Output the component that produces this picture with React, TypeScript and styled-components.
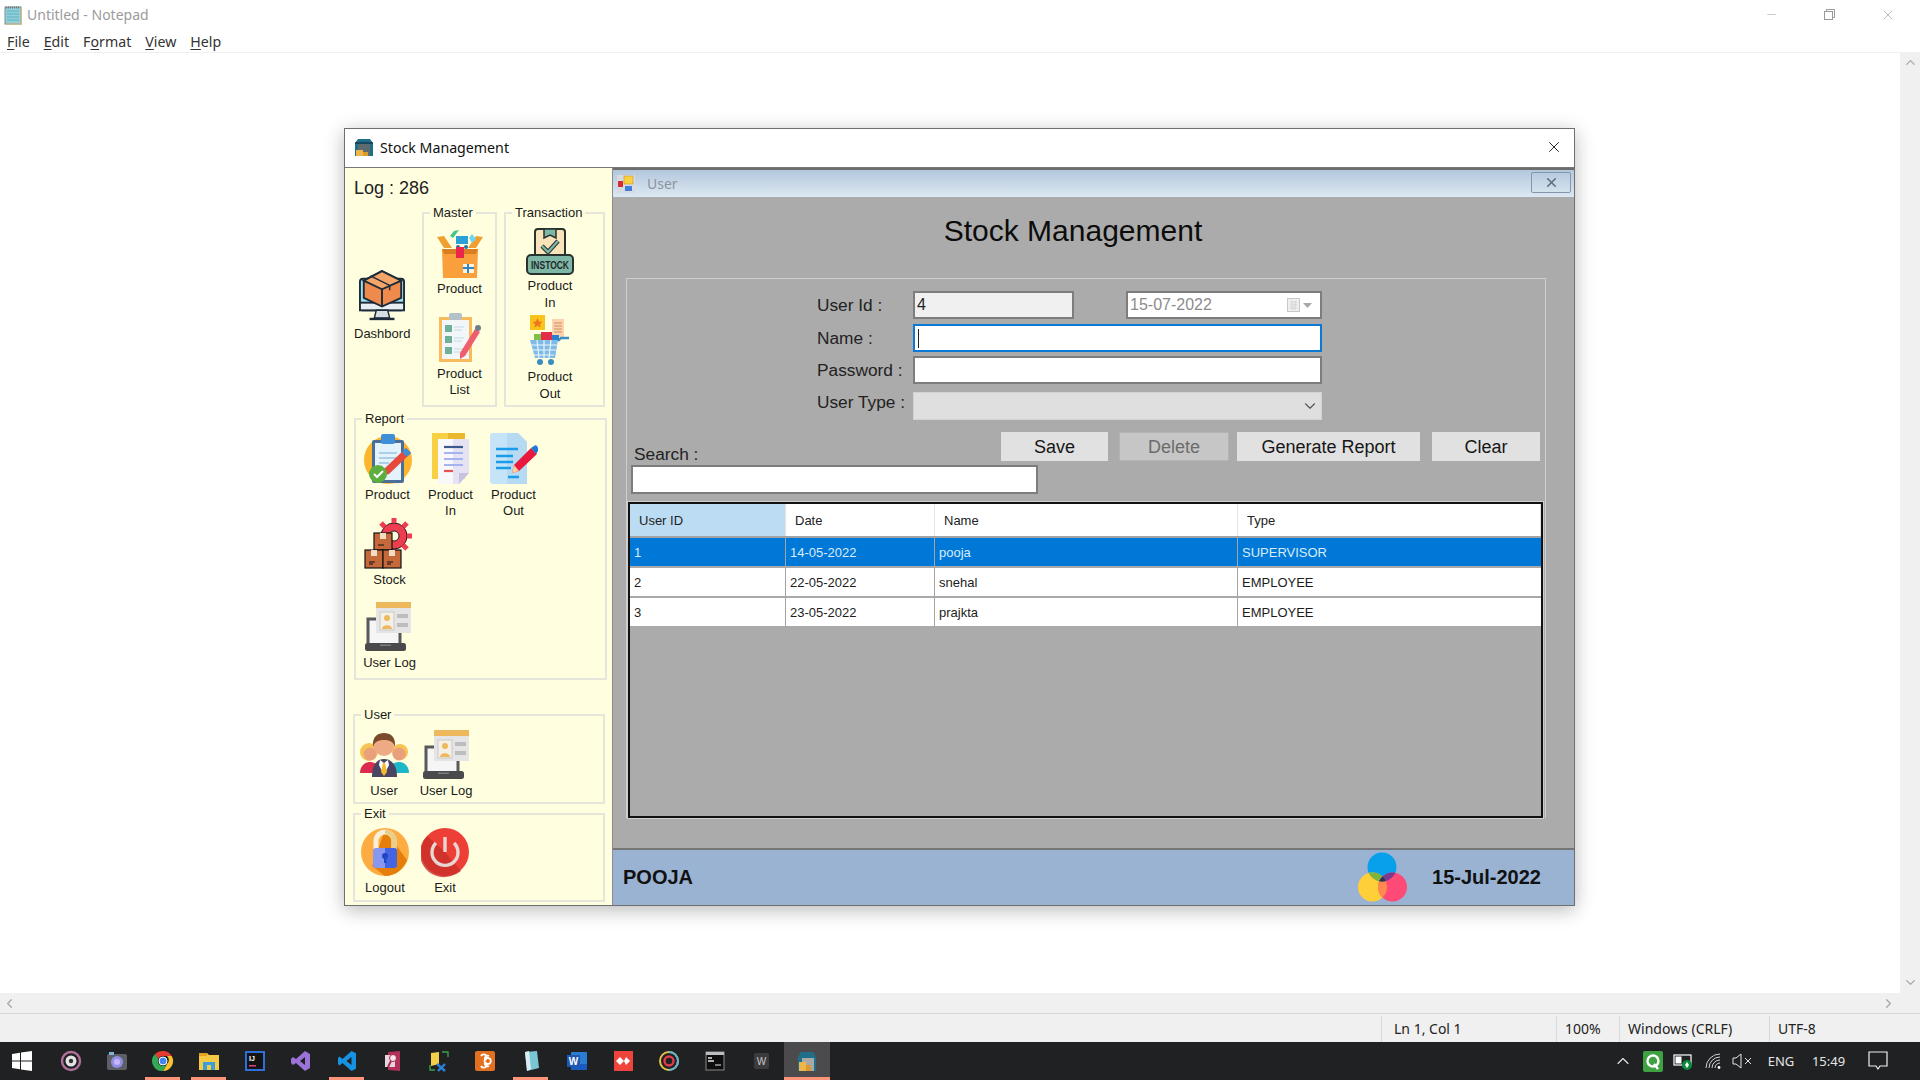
import React from "react";
import styled, { createGlobalStyle } from "styled-components";
import { ChevronDown, ChevronLeft, ChevronRight, ChevronUp, Minus, X } from "lucide-react";

const ui = `"Noto Sans", "Open Sans", sans-serif`;
const arial = `"Liberation Sans", Arial, sans-serif`;

const GlobalStyle = createGlobalStyle`
  html, body {
    margin: 0;
    padding: 0;
    background: #fff;
    overflow: hidden;
  }
  * {
    box-sizing: border-box;
  }
`;

/* ---------- notepad behind the app ---------- */

const Screen = styled.div`
  position: relative;
  width: 1920px;
  height: 1080px;
  display: flex;
  flex-direction: column;
  font-family: ${ui};
`;

const NotepadTitle = styled.div`
  height: 29px;
  display: flex;
  align-items: center;
  padding-left: 3px;
  gap: 4px;
  color: #9b9b9b;
  font-size: 14px;
`;

const TitleText = styled.span`
  flex: 1;
`;

const CaptionButton = styled.div<{ $w?: number }>`
  width: ${(p) => p.$w ?? 58}px;
  height: 29px;
  display: flex;
  align-items: center;
  justify-content: center;
  color: #9a9a9a;
`;

const CaptionGroup = styled.div`
  display: flex;
  padding-right: 3px;
`;

const MenuBar = styled.div`
  height: 24px;
  display: flex;
  align-items: center;
  gap: 14px;
  padding: 1px 0 0 7px;
  font-size: 14.2px;
  color: #333;
  border-bottom: 1px solid #f0f0f0;
`;

const MenuItem = styled.span``;

const Mnemonic = styled.span`
  text-decoration: underline;
  text-underline-offset: 2px;
`;

const EditorRow = styled.div`
  flex: 1;
  display: flex;
  min-height: 0;
`;

const Editor = styled.div`
  flex: 1;
  background: #fff;
`;

const VScroll = styled.div`
  width: 20px;
  background: #f0f0f0;
  display: flex;
  flex-direction: column;
  justify-content: space-between;
  align-items: center;
  padding: 2px 0 3px;
  color: #a6a6a6;
`;

const HScroll = styled.div`
  height: 20px;
  background: #f0f0f0;
  display: flex;
  justify-content: space-between;
  align-items: center;
  padding: 0 24px 0 2px;
  color: #a6a6a6;
`;

const StatusBar = styled.div`
  height: 29px;
  background: #f0f0f0;
  border-top: 1px solid #d9d9d9;
  display: flex;
  justify-content: flex-end;
  font-size: 14px;
  color: #222;
`;

const StatusCell = styled.div<{ $w: number; $pad: number }>`
  width: ${(p) => p.$w}px;
  padding-left: ${(p) => p.$pad}px;
  padding-bottom: 2px;
  margin: 2px 0 0;
  border-left: 1px solid #d9d9d9;
  display: flex;
  align-items: center;
`;

/* ---------- taskbar ---------- */

const Taskbar = styled.div`
  height: 38px;
  background: #1f2123;
  display: flex;
  align-items: stretch;
`;

const StartTile = styled.div`
  width: 48px;
  display: flex;
  align-items: center;
  justify-content: center;
  padding-right: 5px;
`;

const TaskTile = styled.div<{ $running?: boolean; $active?: boolean }>`
  position: relative;
  width: 46px;
  display: flex;
  align-items: center;
  justify-content: center;
  background: ${(p) => (p.$active ? "#4b4b4d" : "transparent")};

  &::after {
    content: "";
    display: ${(p) => (p.$running ? "block" : "none")};
    position: absolute;
    bottom: 0;
    height: 3px;
    left: ${(p) => (p.$active ? "0" : "5px")};
    right: ${(p) => (p.$active ? "0" : "6px")};
    background: #ff9478;
  }
`;

const Tray = styled.div`
  margin-left: auto;
  display: flex;
  padding-right: 15px;
  color: #e6e6e6;
  font-size: 13px;
`;

const TrayItem = styled.div<{ $w: number }>`
  width: ${(p) => p.$w}px;
  display: flex;
  align-items: center;
  justify-content: center;
`;

/* ---------- stock management window ---------- */

const StockWindow = styled.div`
  position: absolute;
  left: 344px;
  top: 128px;
  width: 1231px;
  height: 778px;
  background: #fff;
  border: 1px solid #6f6f6f;
  box-shadow: 0 4px 18px rgba(0, 0, 0, 0.28);
  display: flex;
  flex-direction: column;
`;

const WindowHeader = styled.div`
  height: 39px;
  display: flex;
  align-items: center;
  padding: 0 11px 2px 9px;
  gap: 6px;
  font-size: 14.2px;
  color: #111;
  border-bottom: 1px solid #777;
`;

const WindowTitle = styled.span`
  flex: 1;
`;

const WindowBody = styled.div`
  flex: 1;
  display: flex;
  min-height: 0;
`;

const Sidebar = styled.div`
  width: 267px;
  background: #ffffe0;
  padding-top: 10px;
  font-family: ${arial};
  color: #1a1a1a;
  display: flex;
  flex-direction: column;
`;

const LogText = styled.div`
  height: 20px;
  line-height: 20px;
  padding-left: 9px;
  margin-bottom: 7px;
  font-size: 18px;
  color: #222;
`;

const TopRow = styled.div`
  display: grid;
  grid-template-columns: 70px 75px 101px;
  column-gap: 7px;
  align-items: stretch;
`;

const DashboardCell = styled.div`
  display: flex;
  align-items: center;
  padding-left: 9px;
`;

const Group = styled.fieldset<{ $ml?: number; $width?: number; $mt?: number; $pt: number; $pb: number; $pr?: number }>`
  margin: ${(p) => p.$mt ?? 0}px 0 0 ${(p) => p.$ml ?? 0}px;
  width: ${(p) => (p.$width ? `${p.$width}px` : "auto")};
  min-width: 0;
  border: 2px solid #e5e5dc;
  padding: ${(p) => p.$pt}px ${(p) => p.$pr ?? 0}px ${(p) => p.$pb}px 0;
`;

const GroupLegend = styled.legend`
  margin-left: 6px;
  padding: 0 3px;
  font-size: 13px;
  line-height: 16px;
  color: #1a1a1a;
`;

const TileStack = styled.div<{ $gap: number }>`
  display: flex;
  flex-direction: column;
  gap: ${(p) => p.$gap}px;
`;

const TileGrid = styled.div<{ $cols: string; $rows?: string; $pl?: number }>`
  display: grid;
  grid-template-columns: ${(p) => p.$cols};
  grid-template-rows: ${(p) => p.$rows ?? "auto"};
  padding-left: ${(p) => p.$pl ?? 0}px;
`;

const TileBox = styled.div`
  display: flex;
  flex-direction: column;
  align-items: center;
`;

const TileIcon = styled.div<{ $h: number }>`
  height: ${(p) => p.$h}px;
  display: flex;
  align-items: center;
  justify-content: center;
`;

const TileLabel = styled.div<{ $shift?: number }>`
  margin-top: 3px;
  padding-left: ${(p) => p.$shift ?? 0}px;
  font-size: 13px;
  line-height: 16.5px;
  text-align: center;
  white-space: pre-line;
`;

const MdiArea = styled.div`
  flex: 1;
  min-width: 0;
  display: flex;
  flex-direction: column;
  background: #ababab;
  font-family: ${arial};
  border-left: 1px solid #8c8c8c;
`;

const ChildTitleBar = styled.div`
  height: 29px;
  display: flex;
  align-items: center;
  padding: 0 3px 0 4px;
  gap: 12px;
  background: linear-gradient(#b3c7dc, #dce8f2);
  border-top: 2px solid #6d6d6d;
  font-family: ${ui};
  font-size: 14px;
  color: #8c939b;
`;

const ChildTitleText = styled.span`
  flex: 1;
`;

const ChildClose = styled.div`
  width: 40px;
  height: 21px;
  margin-top: -3px;
  border: 1px solid #8297ae;
  border-radius: 2px;
  display: flex;
  align-items: center;
  justify-content: center;
  color: #5f6f80;
`;

const ChildContent = styled.div`
  flex: 1;
  display: flex;
  flex-direction: column;
  padding: 0 28px 0 13px;
  min-height: 0;
`;

const Heading = styled.h1`
  margin: 0;
  height: 81px;
  padding: 18px 26px 0 0;
  font-size: 30px;
  line-height: 32px;
  font-weight: 400;
  color: #0c0c0c;
  text-align: center;
`;

const Panel = styled.div`
  height: 540px;
  border: 1px solid #cfcfcf;
  border-bottom: none;
  padding: 12px 2px 0 4px;
  display: flex;
  flex-direction: column;
`;

const FormGrid = styled.div`
  display: grid;
  grid-template-columns: 96px 161px 52px 196px;
  grid-template-rows: 33px 32px 36px 28px;
  margin-left: 186px;
`;

const FieldLabel = styled.label<{ $lift?: number }>`
  height: 28px;
  margin-top: ${(p) => -(p.$lift ?? 0)}px;
  display: flex;
  align-items: center;
  font-size: 17.3px;
  color: #222;
`;

const Field = styled.div<{ $bg?: string; $focus?: boolean; $span?: boolean; $col?: number }>`
  height: 28px;
  grid-column: ${(p) => (p.$span ? "2 / 5" : p.$col ? `${p.$col}` : "auto")};
  background: ${(p) => p.$bg ?? "#fff"};
  border: 2px solid ${(p) => (p.$focus ? "#0a78d4" : "#7d7d7d")};
  padding-left: 2px;
  font-size: 16px;
  line-height: 24px;
  color: #222;
  display: flex;
  align-items: center;
`;

const TextCaret = styled.span`
  width: 1px;
  height: 19px;
  margin-left: 1px;
  background: #222;
`;

const DateText = styled.span`
  flex: 1;
  color: #8b8b8b;
`;

const DateGlyphs = styled.span`
  display: flex;
  align-items: center;
  gap: 2px;
  padding-right: 8px;
`;

const SelectField = styled.div`
  height: 28px;
  grid-column: 2 / 5;
  background: #dfdfdf;
  border: 1px solid #d2d2d2;
  display: flex;
  align-items: center;
  justify-content: flex-end;
  padding-right: 2px;
  color: #555;
`;

const ActionGrid = styled.div`
  margin-top: 12px;
  display: grid;
  grid-template-columns: 370px 1fr;
  grid-template-rows: 33px 29px;
`;

const SearchLabel = styled.div`
  align-self: end;
  padding-left: 3px;
  height: 22px;
  line-height: 22px;
  font-size: 17.3px;
  color: #222;
`;

const ButtonRow = styled.div`
  display: flex;
  justify-content: flex-end;
  height: 29px;
  padding-right: 3px;
`;

const ActionButton = styled.button<{ $w: number; $ml?: number; $off?: boolean }>`
  width: ${(p) => p.$w}px;
  margin-left: ${(p) => p.$ml ?? 0}px;
  height: 29px;
  padding: 1px 0 0;
  font-family: ${arial};
  font-size: 18px;
  color: ${(p) => (p.$off ? "#6c6c6c" : "#161616")};
  background: ${(p) => (p.$off ? "#c6c6c6" : "#e1e1e1")};
  border: 1px solid ${(p) => (p.$off ? "#b3b3b3" : "#e1e1e1")};
`;

const SearchInput = styled.div`
  height: 29px;
  width: 407px;
  background: #fff;
  border: 2px solid #7d7d7d;
`;

const DataGrid = styled.div`
  margin: 8px 0 0 -3px;
  flex: 1;
  background: #ababab;
  border: 2px solid #111;
  outline: 1px solid #cdcdcd;
  font-size: 13px;
  min-height: 0;
`;

const GridRow = styled.div<{ $h: number; $selected?: boolean; $header?: boolean }>`
  height: ${(p) => p.$h}px;
  display: grid;
  grid-template-columns: 156px 149px 303px 1fr;
  background: ${(p) => (p.$selected ? "#0078d7" : "#fff")};
  color: ${(p) => (p.$selected ? "#d9ecfb" : "#1c1c1c")};
  border-bottom: 2px solid ${(p) => (p.$header ? "#a3a3a3" : "#a9a9a9")};
`;

const GridCell = styled.div`
  display: flex;
  align-items: center;
  padding-left: 4px;
  border-right: 1px solid #a3a3a3;

  &:last-child {
    border-right: none;
  }
`;

const HeaderCell = styled.div<{ $picked?: boolean; $pad: number }>`
  display: flex;
  align-items: center;
  padding-left: ${(p) => p.$pad}px;
  background: ${(p) => (p.$picked ? "#bcdcf4" : "#fff")};
  border-right: 1px solid #e4e4e4;
  color: #222;
`;

const Footer = styled.div`
  height: 57px;
  background: #9ab3d2;
  border-top: 2px solid #757575;
  display: flex;
  align-items: center;
  padding: 0 33px 0 10px;
  font-size: 20px;
  font-weight: 700;
  color: #111;
`;

const FooterUser = styled.div`
  flex: 1;
`;

const FooterDate = styled.div`
  margin-left: 24px;
`;

/* ---------- drawings ---------- */

type IconProps = { size?: number };

const WarehouseIcon = () => (
  <svg width="20" height="20" viewBox="0 0 20 20">
    <path d="M1 6 4 2h12l3 4v13H1z" fill="#1f6f8b" />
    <rect x="4" y="7" width="12" height="12" fill="#5d6a70" />
    <rect x="2" y="13" width="7" height="6" fill="#eeb54a" />
    <rect x="9" y="15" width="5" height="4" fill="#d99a2e" />
    <path d="M1 6h18" stroke="#123" strokeWidth="1" />
  </svg>
);

const DashboardIcon = ({ size = 46 }: IconProps) => (
  <svg width={size} height={size * 1.15} viewBox="0 0 48 55">
    <rect x="1" y="9" width="46" height="33" rx="3" fill="#9fe0ee" stroke="#1d2b3a" strokeWidth="2" />
    <rect x="1" y="34" width="46" height="8" fill="#e8eef2" stroke="#1d2b3a" strokeWidth="2" />
    <path d="M18 42h12l2 8H16z" fill="#d5dee4" stroke="#1d2b3a" strokeWidth="1.5" />
    <path d="M11 51h26" stroke="#1d2b3a" strokeWidth="2.5" />
    <path d="M24 1 44 11v18L24 38 5 29V11z" fill="#ed8a4c" stroke="#1d2b3a" strokeWidth="2" />
    <path d="M24 1 44 11 24 20 5 11z" fill="#f5a568" stroke="#1d2b3a" strokeWidth="2" />
    <path d="M24 20v18" stroke="#1d2b3a" strokeWidth="2" />
    <path d="M12 6l20 10v5" stroke="#1d2b3a" fill="none" strokeWidth="1.5" />
  </svg>
);

const OpenBoxIcon = () => (
  <svg width="48" height="50" viewBox="0 0 48 50">
    <path d="M8 20 1 9l7-1 8 12zM40 20l7-11-7-1-8 12z" fill="#f0a030" />
    <path d="M18 3l-4 5 3 2 6-8z" fill="#3fc78a" />
    <rect x="20" y="8" width="12" height="8" fill="#2aa0d6" />
    <circle cx="22" cy="19" r="2" fill="#2076a0" />
    <circle cx="30" cy="19" r="2" fill="#2076a0" />
    <path d="M36 6l4 5-4 4-3-5z" fill="#6fd6ef" />
    <path d="M6 21h36l-1 29H7z" fill="#f99f3b" />
    <path d="M6 21h36l-2 5H8z" fill="#d97e22" />
    <rect x="20" y="19" width="8" height="11" fill="#e8274b" />
    <rect x="27" y="36" width="11" height="9" fill="#fff2dc" />
    <path d="M32 36v9M27 40h11" stroke="#2f86c5" strokeWidth="2" />
  </svg>
);

const InstockIcon = () => (
  <svg width="48" height="47" viewBox="0 0 48 47">
    <rect x="9" y="1" width="30" height="30" rx="3" fill="#fbe3b9" stroke="#26332f" strokeWidth="2" />
    <path d="M18 1h12v9l-6-3-6 3z" fill="#7fb7a7" stroke="#26332f" strokeWidth="1.5" />
    <path d="M16 18l6 6 10-11" fill="none" stroke="#26332f" strokeWidth="4.5" />
    <path d="M16 18l6 6 10-11" fill="none" stroke="#7fb7a7" strokeWidth="2.4" />
    <rect x="1" y="27" width="46" height="19" rx="4" fill="#7fb7a7" stroke="#26332f" strokeWidth="2" />
    <text x="24" y="41" textAnchor="middle" fontFamily={arial} fontSize="11" fontWeight="700" fill="#1e2a27" textLength="38" lengthAdjust="spacingAndGlyphs">
      INSTOCK
    </text>
  </svg>
);

const ClipboardListIcon = () => (
  <svg width="44" height="51" viewBox="0 0 44 51">
    <rect x="1" y="5" width="33" height="45" fill="#f7bb5e" />
    <rect x="4" y="8" width="27" height="39" fill="#f2f6f8" />
    <rect x="11" y="1" width="13" height="7" rx="2" fill="#b5c1c8" />
    {[13, 24, 35].map((y) => (
      <g key={y}>
        <rect x="7" y={y} width="7" height="7" fill="#6fb09a" />
        <path d={`M16 ${y + 2}h10M16 ${y + 5}h8`} stroke="#d4e2ec" strokeWidth="1.5" />
      </g>
    ))}
    <path d="M37 17l5 3-15 24-5 3 0-6z" fill="#ef5e6e" />
    <circle cx="40" cy="16" r="3" fill="#6f7f89" />
  </svg>
);

const CartIcon = () => (
  <svg width="42" height="51" viewBox="0 0 42 51">
    <rect x="1" y="0" width="15" height="15" fill="#f9c31c" />
    <path d="M8.5 3l1.6 3.4 3.4.4-2.6 2.4.8 3.3-3.2-1.8-3.2 1.8.8-3.3L3.5 6.8l3.4-.4z" fill="#f0761c" />
    <rect x="23" y="4" width="12" height="18" fill="#fcd3ae" />
    <path d="M25 8h8M25 11h8M25 14h8M25 17h8" stroke="#d08b5c" strokeWidth="1" />
    <rect x="5" y="19" width="8" height="6" fill="#7ec04a" />
    <rect x="12" y="17" width="11" height="8" fill="#e32c48" />
    <rect x="23" y="20" width="7" height="5" fill="#2a7fd0" />
    <path d="M1 25h28l-3 18H6z" fill="#7fbbe6" />
    <path d="M2 30h26M3 35h24M5 40h20M8 25l2 18M15 25v18M22 25l-2 18" stroke="#eaf5fb" strokeWidth="1.2" />
    <path d="M29 26l3-3h8" stroke="#3a8dbf" strokeWidth="2.4" fill="none" />
    <circle cx="11" cy="47" r="3" fill="#3a8dbf" />
    <circle cx="22" cy="47" r="3" fill="#3a8dbf" />
  </svg>
);

const ReportProductIcon = () => (
  <svg width="48" height="51" viewBox="0 0 48 51">
    <circle cx="24" cy="27" r="24" fill="#fdb52e" />
    <rect x="8" y="7" width="32" height="43" rx="2" fill="#4a6e96" />
    <rect x="11" y="10" width="26" height="37" fill="#e3f2fb" />
    <rect x="17" y="1" width="14" height="10" rx="2" fill="#3f8fd8" />
    <path d="M15 20h18M15 25h18M15 30h10" stroke="#a9cfe9" strokeWidth="2" />
    <path d="M42 15l5 5-22 21-7 2 2-7z" fill="#e64a3c" />
    <path d="M38 19l5 5 4-4-5-5z" fill="#3f8fd8" />
    <circle cx="14" cy="41" r="9" fill="#5cae3e" />
    <path d="M10 41l3 3 6-6" stroke="#fff" strokeWidth="2" fill="none" />
  </svg>
);

const ReportInIcon = () => (
  <svg width="37" height="51" viewBox="0 0 37 51">
    <rect x="0" y="0" width="33" height="46" fill="#f7d045" />
    <rect x="16" y="0" width="17" height="7" fill="#e9b82c" />
    <path d="M6 6h31v34l-10 11H6z" fill="#f8f7fa" />
    <path d="M21 6h16v34l-10 11h-6z" fill="#e5e3f3" />
    <path d="M27 51V40h10z" fill="#c6c2e0" />
    <path d="M12 14h19" stroke="#3d5a8f" strokeWidth="2.2" />
    <path d="M12 20h19M12 26h19M12 32h19" stroke="#a3b4f0" strokeWidth="2.2" />
    <path d="M12 38h9" stroke="#e45252" strokeWidth="2.2" />
  </svg>
);

const ReportOutIcon = () => (
  <svg width="48" height="51" viewBox="0 0 48 51">
    <path d="M3 0h25l9 9v39a3 3 0 0 1-3 3H3a3 3 0 0 1-3-3V3a3 3 0 0 1 3-3z" fill="#c5e4f7" />
    <path d="M17 0h11l9 9v42H17z" fill="#b5daf2" />
    <path d="M6 16h22M6 23h17M6 29h17M6 35h15M18 44h11" stroke="#1b9bec" strokeWidth="2.6" />
    <path d="M41 15l6 6-18 17-7 2 2-8z" fill="#e8193c" />
    <path d="M41 15l3-2a2 2 0 0 1 3 0l1 2a2 2 0 0 1 0 3l-2 3z" fill="#1e78d6" />
    <path d="M24 32l-2 8 7-2z" fill="#f7cf9c" />
  </svg>
);

const StockIcon = () => (
  <svg width="48" height="51" viewBox="0 0 48 51">
    <circle cx="30" cy="18" r="13" fill="#ef3d50" stroke="#222" strokeWidth="1" />
    <path d="M30 0v5M30 31v5M12 18h5M43 18h5M17 5l4 4M43 5l-4 4M17 31l4-4M43 31l-4-4" stroke="#ef3d50" strokeWidth="5" />
    <circle cx="30" cy="18" r="5" fill="#ffffe0" stroke="#222" strokeWidth="1" />
    <g stroke="#111" strokeWidth="1.2" fill="#c5693a">
      <rect x="10" y="15" width="18" height="17" />
      <rect x="1" y="32" width="18" height="18" />
      <rect x="19" y="32" width="18" height="18" />
    </g>
    <path d="M16 15h6v6h-6zM7 32h6v6H7zM25 32h6v6h-6z" fill="#f2dcc5" />
    <path d="M5 44h6M5 46h4M23 44h6M23 46h4M14 27h6" stroke="#111" strokeWidth="1" />
  </svg>
);

const UserLogIcon = () => (
  <svg width="46" height="50" viewBox="0 0 46 50">
    <path d="M3 17h32v30H3z" fill="#f5f5f5" stroke="#59595b" strokeWidth="3" />
    <rect x="0" y="41" width="41" height="8" rx="2.5" fill="#4a4a4c" />
    <rect x="15" y="42.5" width="11" height="1.5" fill="#7d7d7f" />
    <rect x="11" y="0" width="35" height="31" fill="#e5e5e6" />
    <rect x="11" y="0" width="35" height="6" fill="#eeb85c" />
    <rect x="15" y="10" width="14" height="18" fill="#f5f0e5" stroke="#c9c9c9" />
    <circle cx="22" cy="16" r="3" fill="#eeb85c" />
    <path d="M17 27c0-5 10-5 10 0z" fill="#eeb85c" />
    <rect x="32" y="12" width="11" height="4" fill="#bdbdbd" />
    <rect x="32" y="21" width="11" height="4" fill="#bdbdbd" />
  </svg>
);

const TeamIcon = () => (
  <svg width="49" height="44" viewBox="0 0 49 44">
    <circle cx="9" cy="19" r="9" fill="#f5c453" />
    <circle cx="40" cy="19" r="8" fill="#f5c453" />
    <circle cx="10" cy="21" r="6.5" fill="#e8a07d" />
    <circle cx="39" cy="21" r="6.5" fill="#e8a07d" />
    <path d="M0 40c0-8 6-11 10-11s10 3 10 11z" fill="#dc2b4e" />
    <path d="M29 40c0-8 6-11 10-11s10 3 10 11z" fill="#1cb7c8" />
    <circle cx="24" cy="13" r="10" fill="#eeaa85" />
    <path d="M13 14C12 3 18 0 24 0s12 3 11 14c-2-5-4-7-11-7s-9 2-11 7z" fill="#7a4a2a" />
    <path d="M12 44c0-14 6-18 12-18s13 4 13 18z" fill="#4a4560" />
    <path d="M20 27l4 3 4-3 1 5-5 10-5-10z" fill="#fff" />
    <path d="M23 30h2l2 9-3 4-3-4z" fill="#f4b92f" />
  </svg>
);

const LockIcon = () => (
  <svg width="48" height="52" viewBox="0 0 48 52">
    <circle cx="24" cy="26" r="24" fill="#fdac42" />
    <path d="M24 4 46 34a24 24 0 0 1-22 16L11 40z" fill="#e57c07" opacity="0.95" />
    <path d="M15 23v-8a9 9 0 0 1 18 0v8" fill="none" stroke="#f9efd9" strokeWidth="5" />
    <path d="M24 6a9 9 0 0 1 9 9v8" fill="none" stroke="#e8cf8a" strokeWidth="5" />
    <rect x="12" y="22" width="24" height="20" rx="3" fill="#8898f0" />
    <path d="M24 22h9a3 3 0 0 1 3 3v14a3 3 0 0 1-3 3h-9z" fill="#4564e2" />
    <circle cx="24" cy="30" r="3" fill="#1f46c5" />
    <rect x="23" y="31" width="2.4" height="6" fill="#1f46c5" />
  </svg>
);

const PowerIcon = () => (
  <svg width="48" height="52" viewBox="0 0 48 52">
    <circle cx="24" cy="26" r="24" fill="#ee3f36" />
    <path d="M6 10a24 24 0 0 0 24 40 24 24 0 0 0 10-5L24 26z" fill="#c9302a" opacity="0.8" />
    <path d="M15 17a13 13 0 1 0 18 0" fill="none" stroke="#e6d6d4" strokeWidth="3.4" />
    <path d="M24 11v15" stroke="#e6d6d4" strokeWidth="3.4" />
  </svg>
);

const ChildFormIcon = () => (
  <svg width="18" height="18" viewBox="0 0 18 18">
    <rect x="0" y="0" width="18" height="18" fill="#d6dbe2" />
    <rect x="1" y="6" width="5" height="6" fill="#d62c2c" />
    <rect x="7" y="1" width="9" height="8" fill="#fbd040" stroke="#b98a16" strokeWidth="0.5" />
    <rect x="8" y="11" width="7" height="5" fill="#3f7fd9" />
  </svg>
);

const CalendarGlyph = () => (
  <svg width="14" height="15" viewBox="0 0 14 15">
    <rect x="0.5" y="0.5" width="12" height="13" fill="#eeeeee" stroke="#c9c9c9" />
    <path d="M3 4h7M3 7h7M3 10h7M5 3v9M8 3v9" stroke="#d4d4d4" strokeWidth="1" />
  </svg>
);

const SmallCaret = () => (
  <svg width="9" height="5" viewBox="0 0 9 5">
    <path d="M0 0h9L4.5 5z" fill="#a8a8a8" />
  </svg>
);

const LogoCircles = () => (
  <svg width="50" height="52" viewBox="0 0 50 52">
    <defs>
      <clipPath id="logoBlue">
        <circle cx="24" cy="15" r="14.5" />
      </clipPath>
      <clipPath id="logoYellow">
        <circle cx="14.5" cy="35" r="14.5" />
      </clipPath>
    </defs>
    <circle cx="24" cy="15" r="14.5" fill="#08a0ea" />
    <circle cx="14.5" cy="35" r="14.5" fill="#ffcf3a" />
    <circle cx="34.5" cy="35" r="14.5" fill="#ff4a78" />
    <g clipPath="url(#logoYellow)">
      <circle cx="34.5" cy="35" r="14.5" fill="#ff8a4c" />
      <circle cx="24" cy="15" r="14.5" fill="#7fb33c" />
    </g>
    <g clipPath="url(#logoBlue)">
      <circle cx="34.5" cy="35" r="14.5" fill="#7a3a8e" />
      <g clipPath="url(#logoYellow)">
        <circle cx="34.5" cy="35" r="14.5" fill="#2c3158" />
      </g>
    </g>
  </svg>
);

const NotepadGlyph = () => (
  <svg width="20" height="20" viewBox="0 0 20 20">
    <rect x="2" y="2" width="16" height="17" fill="#8fd0dc" stroke="#7d8b8f" strokeWidth="1" />
    <path d="M4 6h12M4 9h12M4 12h12M4 15h12" stroke="#5fb0c0" strokeWidth="1" />
    <path d="M3 2.5h14" stroke="#777" strokeWidth="2" strokeDasharray="1 1" />
    <path d="M18 3v16H3" stroke="#c7b890" strokeWidth="1.4" fill="none" />
  </svg>
);

const RestoreGlyph = () => (
  <svg width="11" height="11" viewBox="0 0 11 11" fill="none" stroke="#9a9a9a">
    <rect x="0.5" y="2.5" width="8" height="8" />
    <path d="M2.5 2.5v-2h8v8h-2" />
  </svg>
);

/* taskbar drawings */

const TaskIcon = ({ children }: { children: React.ReactNode }) => (
  <svg width="22" height="22" viewBox="0 0 22 22">
    {children}
  </svg>
);

const taskIcons: { key: string; running?: boolean; active?: boolean; art: React.ReactNode }[] = [
  {
    key: "obs",
    art: (
      <>
        <circle cx="11" cy="11" r="9" fill="none" stroke="#b0709a" strokeWidth="2.4" />
        <circle cx="11" cy="11" r="5.5" fill="#e4e4e4" />
        <circle cx="11" cy="11" r="2.2" fill="#333" />
      </>
    ),
  },
  {
    key: "camera",
    art: (
      <>
        <rect x="1" y="4" width="20" height="16" rx="2" fill="#5c6066" />
        <rect x="3" y="2" width="5" height="3" fill="#7fb2d8" />
        <circle cx="11" cy="12" r="6" fill="#8f8fe8" />
        <circle cx="11" cy="12" r="3" fill="#c9b6f5" />
      </>
    ),
  },
  {
    key: "chrome",
    running: true,
    art: (
      <>
        <path d="M11 1a10 10 0 0 1 8.7 5H11a5 5 0 0 0-4.6 3L3 4a10 10 0 0 1 8-3z" fill="#e53b30" />
        <path d="M19.7 6A10 10 0 0 1 11 21l4.3-7.5A5 5 0 0 0 15 6z" fill="#fbc02d" />
        <path d="M3 4a10 10 0 0 0 8 17l4.3-7.5a5 5 0 0 1-8.9-4.5z" fill="#34a853" />
        <circle cx="11" cy="11" r="4" fill="#3f86f4" stroke="#fff" strokeWidth="1" />
      </>
    ),
  },
  {
    key: "folder",
    running: true,
    art: (
      <>
        <path d="M1 3h8l2 2h10v15H1z" fill="#f6c945" />
        <path d="M1 3h8v3H1z" fill="#e0a420" />
        <rect x="5" y="12" width="12" height="8" fill="#3a9ddc" />
        <rect x="9" y="15" width="4" height="5" fill="#f6c945" />
      </>
    ),
  },
  {
    key: "idea",
    art: (
      <>
        <rect x="1" y="1" width="20" height="20" fill="#2e6fd8" />
        <rect x="3" y="3" width="16" height="16" fill="#141414" />
        <text x="5" y="11" fontFamily={arial} fontSize="7" fontWeight="700" fill="#fff">
          IJ
        </text>
        <rect x="5" y="15" width="7" height="1.5" fill="#e0407a" />
      </>
    ),
  },
  {
    key: "vs",
    art: <path d="M15 1l5 3v14l-5 3-9-8-3 2-2-2V9l2-2 3 2zm0 6-5 4 5 4z" fill="#9a72d8" />,
  },
  {
    key: "vscode",
    running: true,
    art: <path d="M15.5 1 20 3.2v15.6L15.5 21 6.5 13l-3 2.4L2 14V8l1.5-1.4 3 2.4zm0 6-5 4 5 4z" fill="#1593e2" />,
  },
  {
    key: "access",
    art: (
      <>
        <path d="M6 2l12-1v20L6 20z" fill="#b1305a" />
        <rect x="3" y="5" width="10" height="12" fill="#e9d3dc" />
        <circle cx="11" cy="8" r="3.5" fill="#f6e6ec" stroke="#a52a50" />
        <path d="M9 11l-3 6" stroke="#a52a50" strokeWidth="2" />
      </>
    ),
  },
  {
    key: "tools",
    art: (
      <>
        <path d="M3 3l8-1v12l-8 2z" fill="#f4cf4a" />
        <path d="M9 14l8 7M17 14l-7 7" stroke="#2a7fd8" strokeWidth="2.4" />
        <path d="M14 2h6v5M2 15v5h5" stroke="#3aa04f" strokeWidth="1.4" fill="none" />
      </>
    ),
  },
  {
    key: "xampp",
    art: (
      <>
        <rect x="1" y="1" width="20" height="20" rx="2" fill="#e3701f" />
        <path d="M7 6a3 3 0 1 1 4 4 3 3 0 1 1 0 2 3 3 0 1 1-4 4M15 6a3 3 0 0 0-4 4M15 16a3 3 0 0 1-4-4" stroke="#fff" strokeWidth="1.8" fill="none" />
      </>
    ),
  },
  {
    key: "notepad",
    running: true,
    art: (
      <>
        <path d="M5 2l12-1 2 17-12 3z" fill="#79c5d3" />
        <path d="M5 2l4-1 2 18-4 2z" fill="#d8eef2" />
      </>
    ),
  },
  {
    key: "word",
    art: (
      <>
        <rect x="5" y="2" width="16" height="18" rx="1" fill="#2b7cd3" />
        <rect x="5" y="14" width="16" height="6" fill="#185abd" />
        <rect x="1" y="5" width="13" height="12" fill="#1f57b5" />
        <text x="7.5" y="15" textAnchor="middle" fontFamily={arial} fontSize="10" fontWeight="700" fill="#fff">
          W
        </text>
      </>
    ),
  },
  {
    key: "anydesk",
    art: (
      <>
        <rect x="2" y="1" width="19" height="20" fill="#ef443b" />
        <path d="M8 7l4 4-4 4-4-4zM14 7l4 4-4 4-2-4z" fill="#fff" />
      </>
    ),
  },
  {
    key: "target",
    art: (
      <>
        <circle cx="11" cy="11" r="9" fill="none" stroke="#e3c14b" strokeWidth="2" />
        <path d="M11 2a9 9 0 0 1 0 18" fill="none" stroke="#5db5d8" strokeWidth="2" />
        <circle cx="11" cy="11" r="4.5" fill="none" stroke="#e23b4e" strokeWidth="2.4" />
      </>
    ),
  },
  {
    key: "cmd",
    art: (
      <>
        <rect x="2" y="2" width="18" height="18" fill="#0e0e0e" stroke="#8a8a8a" />
        <rect x="2" y="2" width="18" height="3" fill="#bdbdbd" />
        <path d="M4 8h4M4 11h6" stroke="#e8e8e8" strokeWidth="1.5" />
        <path d="M11 15h6" stroke="#e8e8e8" strokeWidth="1" />
      </>
    ),
  },
  {
    key: "wamp",
    art: (
      <>
        <rect x="4" y="3" width="15" height="16" rx="2" fill="#3b3b3d" />
        <text x="11.5" y="15" textAnchor="middle" fontFamily={arial} fontSize="10" fill="#c9c9c9">
          W
        </text>
      </>
    ),
  },
  {
    key: "stock",
    running: true,
    active: true,
    art: (
      <>
        <path d="M2 7l3-5h12l3 5v14H2z" fill="#1f6f8b" />
        <rect x="6" y="8" width="12" height="13" fill="#a8a8a8" />
        <rect x="3" y="12" width="7" height="9" fill="#eeb54a" />
        <rect x="10" y="15" width="5" height="6" fill="#d99a2e" />
      </>
    ),
  },
];

/* ---------- data ---------- */

const users = [
  { id: "1", date: "14-05-2022", name: "pooja", type: "SUPERVISOR" },
  { id: "2", date: "22-05-2022", name: "snehal", type: "EMPLOYEE" },
  { id: "3", date: "23-05-2022", name: "prajkta", type: "EMPLOYEE" },
];

const Tile: React.FC<{ label: string; h: number; shift?: number; children: React.ReactNode }> = ({
  label,
  h,
  shift,
  children,
}) => (
  <TileBox>
    <TileIcon $h={h}>{children}</TileIcon>
    <TileLabel $shift={shift}>{label}</TileLabel>
  </TileBox>
);

export default function App() {
  return (
    <Screen>
      <GlobalStyle />
      <NotepadTitle>
        <NotepadGlyph />
        <TitleText>Untitled - Notepad</TitleText>
        <CaptionGroup>
          <CaptionButton>
            <Minus size={13} strokeWidth={1} />
          </CaptionButton>
          <CaptionButton>
            <RestoreGlyph />
          </CaptionButton>
          <CaptionButton $w={59}>
            <X size={16} strokeWidth={1} />
          </CaptionButton>
        </CaptionGroup>
      </NotepadTitle>
      <MenuBar>
        <MenuItem>
          <Mnemonic>F</Mnemonic>ile
        </MenuItem>
        <MenuItem>
          <Mnemonic>E</Mnemonic>dit
        </MenuItem>
        <MenuItem>
          F<Mnemonic>o</Mnemonic>rmat
        </MenuItem>
        <MenuItem>
          <Mnemonic>V</Mnemonic>iew
        </MenuItem>
        <MenuItem>
          <Mnemonic>H</Mnemonic>elp
        </MenuItem>
      </MenuBar>
      <EditorRow>
        <Editor />
        <VScroll>
          <ChevronUp size={15} />
          <ChevronDown size={15} />
        </VScroll>
      </EditorRow>
      <HScroll>
        <ChevronLeft size={15} />
        <ChevronRight size={15} />
      </HScroll>
      <StatusBar>
        <StatusCell $w={175} $pad={12}>
          Ln 1, Col 1
        </StatusCell>
        <StatusCell $w={63} $pad={8}>
          100%
        </StatusCell>
        <StatusCell $w={150} $pad={8}>
          Windows (CRLF)
        </StatusCell>
        <StatusCell $w={151} $pad={8}>
          UTF-8
        </StatusCell>
      </StatusBar>
      <Taskbar>
        <StartTile>
          <svg width="20" height="20" viewBox="0 0 20 20" fill="#fff">
            <path d="M0 3l8-1.2V9.5H0zM9 1.6 20 0v9.5H9zM0 10.5h8v7.7L0 17zM9 10.5h11V20L9 18.4z" />
          </svg>
        </StartTile>
        {taskIcons.map((t) => (
          <TaskTile key={t.key} $running={t.running} $active={t.active}>
            <TaskIcon>{t.art}</TaskIcon>
          </TaskTile>
        ))}
        <Tray>
          <TrayItem $w={30}>
            <ChevronUp size={20} strokeWidth={1.3} />
          </TrayItem>
          <TrayItem $w={30}>
            <svg width="20" height="21" viewBox="0 0 20 21">
              <rect width="20" height="21" rx="2" fill="#3fa142" />
              <circle cx="10" cy="10" r="5.5" fill="none" stroke="#fff" strokeWidth="2.4" />
              <path d="M11 13l4 5" stroke="#fff" strokeWidth="2.4" />
            </svg>
          </TrayItem>
          <TrayItem $w={30}>
            <svg width="20" height="20" viewBox="0 0 20 20">
              <rect x="1" y="4" width="17" height="10" fill="none" stroke="#fff" strokeWidth="1.2" />
              <rect x="2.5" y="5.5" width="6" height="7" fill="#fff" />
              <circle cx="14" cy="14" r="5" fill="#0b8a3c" />
              <path d="M14 11l2 3-2 3-2-3z" fill="#fff" />
            </svg>
          </TrayItem>
          <TrayItem $w={30}>
            <svg width="18" height="18" viewBox="0 0 18 18" fill="none" stroke="#e6e6e6">
              <path d="M2 16a14 14 0 0 1 14-14M5 16A11 11 0 0 1 16 5M8 16a8 8 0 0 1 8-8M11 16a5 5 0 0 1 5-5" strokeWidth="0.9" />
              <circle cx="15" cy="15.5" r="1.4" fill="#fff" stroke="none" />
            </svg>
          </TrayItem>
          <TrayItem $w={28}>
            <svg width="20" height="16" viewBox="0 0 20 16" fill="none" stroke="#e6e6e6" strokeWidth="1">
              <path d="M1 5h3l5-4v14l-5-4H1z" />
              <path d="M13 5l6 6M19 5l-6 6" />
            </svg>
          </TrayItem>
          <TrayItem $w={50}>ENG</TrayItem>
          <TrayItem $w={45}>15:49</TrayItem>
          <TrayItem $w={54}>
            <svg width="20" height="20" viewBox="0 0 20 20" fill="none" stroke="#f0f0f0" strokeWidth="1.2">
              <path d="M1 1h18v14h-7l-2 3-2-3H1z" />
            </svg>
          </TrayItem>
        </Tray>
      </Taskbar>

      <StockWindow>
        <WindowHeader>
          <WarehouseIcon />
          <WindowTitle>Stock Management</WindowTitle>
          <X size={18} strokeWidth={1.3} color="#222" />
        </WindowHeader>
        <WindowBody>
          <Sidebar>
            <LogText>Log : 286</LogText>
            <TopRow>
              <DashboardCell>
                <Tile label="Dashbord" h={53}>
                  <DashboardIcon />
                </Tile>
              </DashboardCell>
              <Group $pt={7} $pb={6}>
                <GroupLegend>Master</GroupLegend>
                <TileStack $gap={14}>
                  <Tile label="Product" h={50}>
                    <OpenBoxIcon />
                  </Tile>
                  <Tile label={"Product\nList"} h={51}>
                    <ClipboardListIcon />
                  </Tile>
                </TileStack>
              </Group>
              <Group $pt={7} $pb={1} $pr={9}>
                <GroupLegend>Transaction</GroupLegend>
                <TileStack $gap={4}>
                  <Tile label={"Product\nIn"} h={47}>
                    <InstockIcon />
                  </Tile>
                  <Tile label={"Product\nOut"} h={51}>
                    <CartIcon />
                  </Tile>
                </TileStack>
              </Group>
            </TopRow>
            <Group $ml={9} $width={253} $mt={4} $pt={6} $pb={7}>
              <GroupLegend>Report</GroupLegend>
              <TileGrid $cols="repeat(3, 63px) 1fr" $rows="85px 84px 69px">
                <Tile label="Product" h={51}>
                  <ReportProductIcon />
                </Tile>
                <Tile label={"Product\nIn"} h={51}>
                  <ReportInIcon />
                </Tile>
                <Tile label={"Product\nOut"} h={51}>
                  <ReportOutIcon />
                </Tile>
                <span />
                <Tile label="Stock" h={51} shift={4}>
                  <StockIcon />
                </Tile>
                <span />
                <span />
                <span />
                <Tile label="User Log" h={50} shift={4}>
                  <UserLogIcon />
                </Tile>
              </TileGrid>
            </Group>
            <Group $ml={8} $width={252} $mt={27} $pt={7} $pb={3}>
              <GroupLegend>User</GroupLegend>
              <TileGrid $cols="58px 66px 1fr">
                <Tile label="User" h={50}>
                  <TeamIcon />
                </Tile>
                <Tile label="User Log" h={50}>
                  <UserLogIcon />
                </Tile>
              </TileGrid>
            </Group>
            <Group $ml={8} $width={252} $mt={2} $pt={4} $pb={3}>
              <GroupLegend>Exit</GroupLegend>
              <TileGrid $cols="60px 60px 1fr">
                <Tile label="Logout" h={51}>
                  <LockIcon />
                </Tile>
                <Tile label="Exit" h={51}>
                  <PowerIcon />
                </Tile>
              </TileGrid>
            </Group>
          </Sidebar>

          <MdiArea>
            <ChildTitleBar>
              <ChildFormIcon />
              <ChildTitleText>User</ChildTitleText>
              <ChildClose>
                <X size={15} strokeWidth={2.6} />
              </ChildClose>
            </ChildTitleBar>
            <ChildContent>
              <Heading>Stock Management</Heading>
              <Panel>
                <FormGrid>
                  <FieldLabel>User Id :</FieldLabel>
                  <Field $bg="#f0f0f0">4</Field>
                  <Field $col={4}>
                    <DateText>15-07-2022</DateText>
                    <DateGlyphs>
                      <CalendarGlyph />
                      <SmallCaret />
                    </DateGlyphs>
                  </Field>
                  <FieldLabel>Name :</FieldLabel>
                  <Field $span $focus>
                    <TextCaret />
                  </Field>
                  <FieldLabel>Password :</FieldLabel>
                  <Field $span />
                  <FieldLabel $lift={4}>User Type :</FieldLabel>
                  <SelectField>
                    <ChevronDown size={18} strokeWidth={1.5} />
                  </SelectField>
                </FormGrid>
                <ActionGrid>
                  <SearchLabel>Search :</SearchLabel>
                  <ButtonRow>
                    <ActionButton $w={107}>Save</ActionButton>
                    <ActionButton $w={110} $ml={11} $off>
                      Delete
                    </ActionButton>
                    <ActionButton $w={183} $ml={8}>
                      Generate Report
                    </ActionButton>
                    <ActionButton $w={108} $ml={12}>
                      Clear
                    </ActionButton>
                  </ButtonRow>
                  <SearchInput />
                </ActionGrid>
                <DataGrid>
                  <GridRow $h={34} $header>
                    <HeaderCell $picked $pad={9}>
                      User ID
                    </HeaderCell>
                    <HeaderCell $pad={9}>Date</HeaderCell>
                    <HeaderCell $pad={9}>Name</HeaderCell>
                    <HeaderCell $pad={9}>Type</HeaderCell>
                  </GridRow>
                  {users.map((u, i) => (
                    <GridRow key={u.id} $h={30} $selected={i === 0}>
                      <GridCell>{u.id}</GridCell>
                      <GridCell>{u.date}</GridCell>
                      <GridCell>{u.name}</GridCell>
                      <GridCell>{u.type}</GridCell>
                    </GridRow>
                  ))}
                </DataGrid>
              </Panel>
            </ChildContent>
            <Footer>
              <FooterUser>POOJA</FooterUser>
              <LogoCircles />
              <FooterDate>15-Jul-2022</FooterDate>
            </Footer>
          </MdiArea>
        </WindowBody>
      </StockWindow>
    </Screen>
  );
}
